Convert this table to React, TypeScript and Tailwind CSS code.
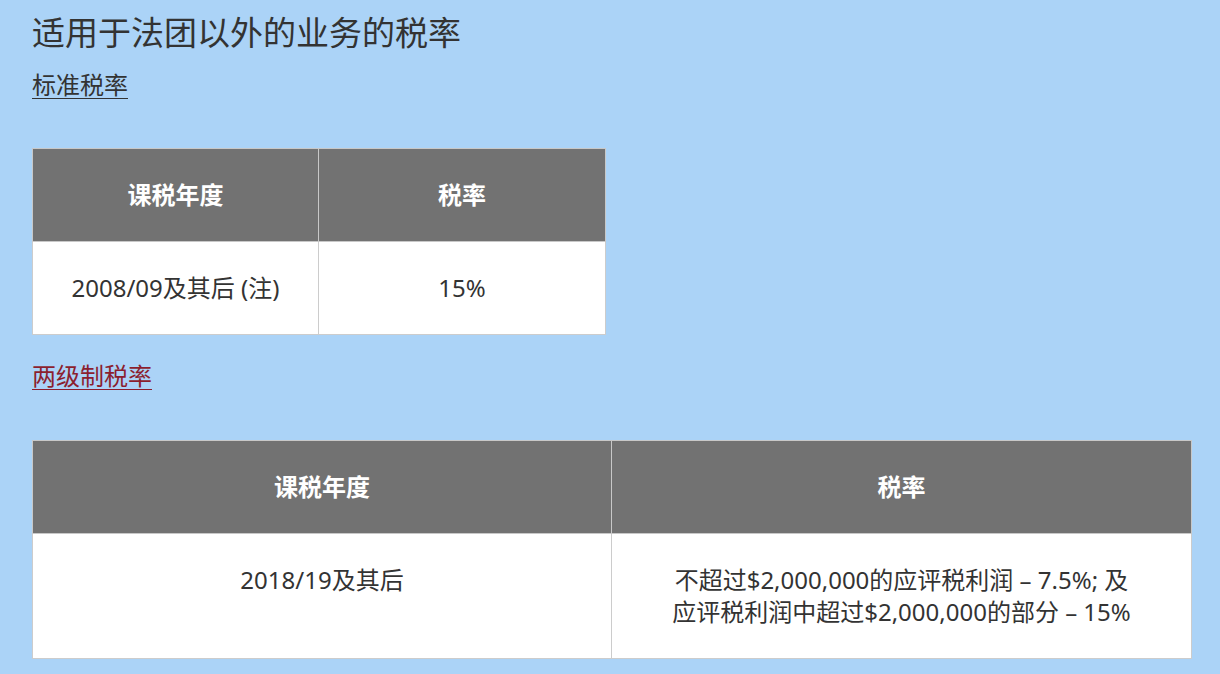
const FONT = "font-['Noto_Sans','Noto_Sans_CJK_SC',sans-serif]";

const STANDARD = [{ year: '2008/09及其后 (注)', rate: ['15%'] }];
const TWO_TIER = [
  {
    year: '2018/19及其后',
    rate: ['不超过$2,000,000的应评税利润 – 7.5%; 及', '应评税利润中超过$2,000,000的部分 – 15%'],
  },
];

function RateTable({ rows, width, leftWidth }: {
  rows: { year: string; rate: string[] }[];
  width: string;
  leftWidth: string;
}) {
  return (
    <table className={`${width} border-collapse table-fixed`}>
      <colgroup>
        <col className={leftWidth} />
        <col />
      </colgroup>
      <thead>
        <tr>
          <th className="bg-[#727272] border border-[#c8c8c8] px-4 py-[30px] text-[24px] leading-[32px] font-bold text-white text-center align-top">
            课税年度
          </th>
          <th className="bg-[#727272] border border-[#c8c8c8] px-4 py-[30px] text-[24px] leading-[32px] font-bold text-white text-center align-top">
            税率
          </th>
        </tr>
      </thead>
      <tbody>
        {rows.map(row => (
          <tr key={row.year}>
            <td className="bg-white border border-[#cccccc] px-4 py-[30px] text-[24px] leading-[32px] text-[#333] text-center align-top">
              {row.year}
            </td>
            <td className="bg-white border border-[#cccccc] px-4 py-[30px] text-[24px] leading-[32px] text-[#333] text-center align-top">
              {row.rate.map(line => (
                <div key={line}>{line}</div>
              ))}
            </td>
          </tr>
        ))}
      </tbody>
    </table>
  );
}

export default function App() {
  return (
    <div className={`min-h-[674px] bg-[#abd3f7] px-8 pt-[10px] text-[#333] ${FONT}`}>
      <h1 className="text-[33px] leading-[45px] font-normal">适用于法团以外的业务的税率</h1>
      <p className="mt-[12px] text-[24px] leading-[36px]">
        <a href="#" className="underline underline-offset-[4px] decoration-1 text-[#333]">标准税率</a>
      </p>
      <div className="mt-[45px]">
        <RateTable rows={STANDARD} width="w-[574px]" leftWidth="w-[286px]" />
      </div>
      <p className="mt-[23px] text-[24px] leading-[36px]">
        <a href="#" className="underline underline-offset-[4px] decoration-1 text-[#8b1f2f]">两级制税率</a>
      </p>
      <div className="mt-[46px] pb-4">
        <RateTable rows={TWO_TIER} width="w-[1160px]" leftWidth="w-[579px]" />
      </div>
    </div>
  );
}
